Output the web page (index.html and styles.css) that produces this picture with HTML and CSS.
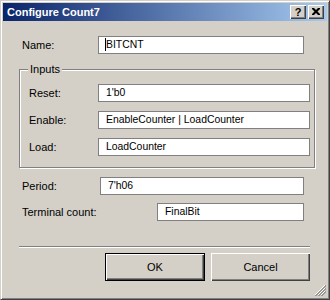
FILE: index.html
```html
<!DOCTYPE html>
<html lang="en">
<head>
  <meta charset="UTF-8" />
  <title>Configure Count7</title>
  <link rel="stylesheet" href="styles.css">
</head>
<body>
  <div class="window">
    <div class="titlebar">
      <span class="title">Configure Count7</span>
      <div class="caption-btns">
        <div class="cap-btn help">?</div>
        <div class="cap-btn close">
          <svg width="8" height="7" viewBox="0 0 8 7"><path d="M0 0h2l2 2 2-2h2v1l-2.5 2.5L8 6v1H6L4 5 2 7H0V6l2.5-2.5L0 1z" fill="#000"/></svg>
        </div>
      </div>
    </div>

    <div class="content">
      <div class="row name-row">
        <span class="label">Name:</span>
        <div class="field"><span class="caret"></span>BITCNT</div>
      </div>

      <div class="group">
        <span class="legend">Inputs</span>
        <div class="row">
          <span class="label">Reset:</span>
          <div class="field">1'b0</div>
        </div>
        <div class="row">
          <span class="label">Enable:</span>
          <div class="field">EnableCounter | LoadCounter</div>
        </div>
        <div class="row">
          <span class="label">Load:</span>
          <div class="field">LoadCounter</div>
        </div>
      </div>

      <div class="row period-row">
        <span class="label">Period:</span>
        <div class="field">7'h06</div>
      </div>
      <div class="row terminal-row">
        <span class="label">Terminal count:</span>
        <div class="field">FinalBit</div>
      </div>

      <div class="separator"></div>

      <div class="buttons">
        <button class="btn default">OK</button>
        <button class="btn">Cancel</button>
      </div>
    </div>

    <svg class="grip" width="12" height="12" viewBox="0 0 12 12">
      <path d="M11 1L1 11M11 4L4 11M11 7L7 11" stroke="#fff" stroke-width="1"/>
      <path d="M12 1L1 12M12 2L2 12M12 4L4 12M12 5L5 12M12 7L7 12M12 8L8 12" stroke="#808080" stroke-width="0.7"/>
    </svg>
  </div>
</body>
</html>
```

FILE: styles.css
```css
body {
  margin: 0;
  background: #d4d0c8;
  font-family: "Liberation Sans", Arial, sans-serif;
  font-size: 11px;
  color: #000;
}
.window {
  position: relative;
  width: 330px;
  height: 300px;
  box-sizing: border-box;
  border: 1px solid;
  border-color: #d4d0c8 #404040 #404040 #d4d0c8;
  box-shadow: inset 1px 1px 0 #fff, inset -1px -1px 0 #808080;
  padding: 2px;
  background: #d4d0c8;
}
.titlebar {
  height: 18px;
  background: linear-gradient(to right, #0a246a, #a6caf0);
  display: flex;
  align-items: center;
  justify-content: space-between;
  padding: 0 3px 0 4px;
}
.title {
  color: #fff;
  font-weight: bold;
  font-size: 11px;
}
.caption-btns {
  display: flex;
  gap: 2px;
}
.cap-btn {
  width: 16px;
  height: 14px;
  box-sizing: border-box;
  background: #d4d0c8;
  box-shadow: inset 1px 1px 0 #fff, inset -1px -1px 0 #404040, inset -2px -2px 0 #808080;
  display: flex;
  align-items: center;
  justify-content: center;
  font-weight: bold;
  font-size: 11px;
  line-height: 14px;
}
.cap-btn svg {
  margin-top: -1px;
}
.content {
  padding: 0 17px 0 16px;
}
.row {
  display: flex;
  align-items: center;
}
.label {
  flex: none;
}
.field {
  height: 18px;
  box-sizing: border-box;
  border: 1px solid #808080;
  background: #fff;
  padding-left: 7px;
  line-height: 16px;
  font-size: 10.4px;
  flex: 1;
  white-space: nowrap;
}
.caret {
  display: inline-block;
  width: 1px;
  height: 13px;
  background: #000;
  vertical-align: -3px;
  margin-left: -1px;
}
.name-row {
  margin-top: 15px;
  padding: 0 6px 0 3px;
}
.name-row .label {
  width: 76px;
}
.group {
  position: relative;
  margin-top: 15px;
  width: 296px;
  box-sizing: border-box;
  border: 1px solid #808080;
  box-shadow: 1px 1px 0 #fff, inset 1px 1px 0 #fff;
  padding: 14px 4px 11px 9px;
  display: flex;
  flex-direction: column;
  gap: 9px;
}
.legend {
  position: absolute;
  top: -7px;
  left: 8px;
  padding: 0 2px;
  background: #d4d0c8;
}
.group .label {
  width: 69px;
}
.period-row {
  margin-top: 9px;
  padding: 0 6px 0 3px;
}
.period-row .label {
  width: 78px;
}
.terminal-row {
  margin-top: 8px;
  padding: 0 6px 0 3px;
}
.terminal-row .label {
  width: 135px;
}
.separator {
  margin-top: 25px;
  height: 1px;
  background: #808080;
  border-bottom: 1px solid #fff;
}
.buttons {
  margin-top: 5px;
  display: flex;
  justify-content: flex-end;
  gap: 6px;
}
.btn {
  width: 99px;
  height: 28px;
  box-sizing: border-box;
  font-family: inherit;
  font-size: 11px;
  color: #000;
  background: #d4d0c8;
  border: none;
  box-shadow: inset 1px 1px 0 #fff, inset -1px -1px 0 #404040, inset -2px -2px 0 #808080;
  padding: 0;
}
.btn.default {
  width: 100px;
  border: 1px solid #000;
}
.grip {
  position: absolute;
  right: 3px;
  bottom: 3px;
}
```
